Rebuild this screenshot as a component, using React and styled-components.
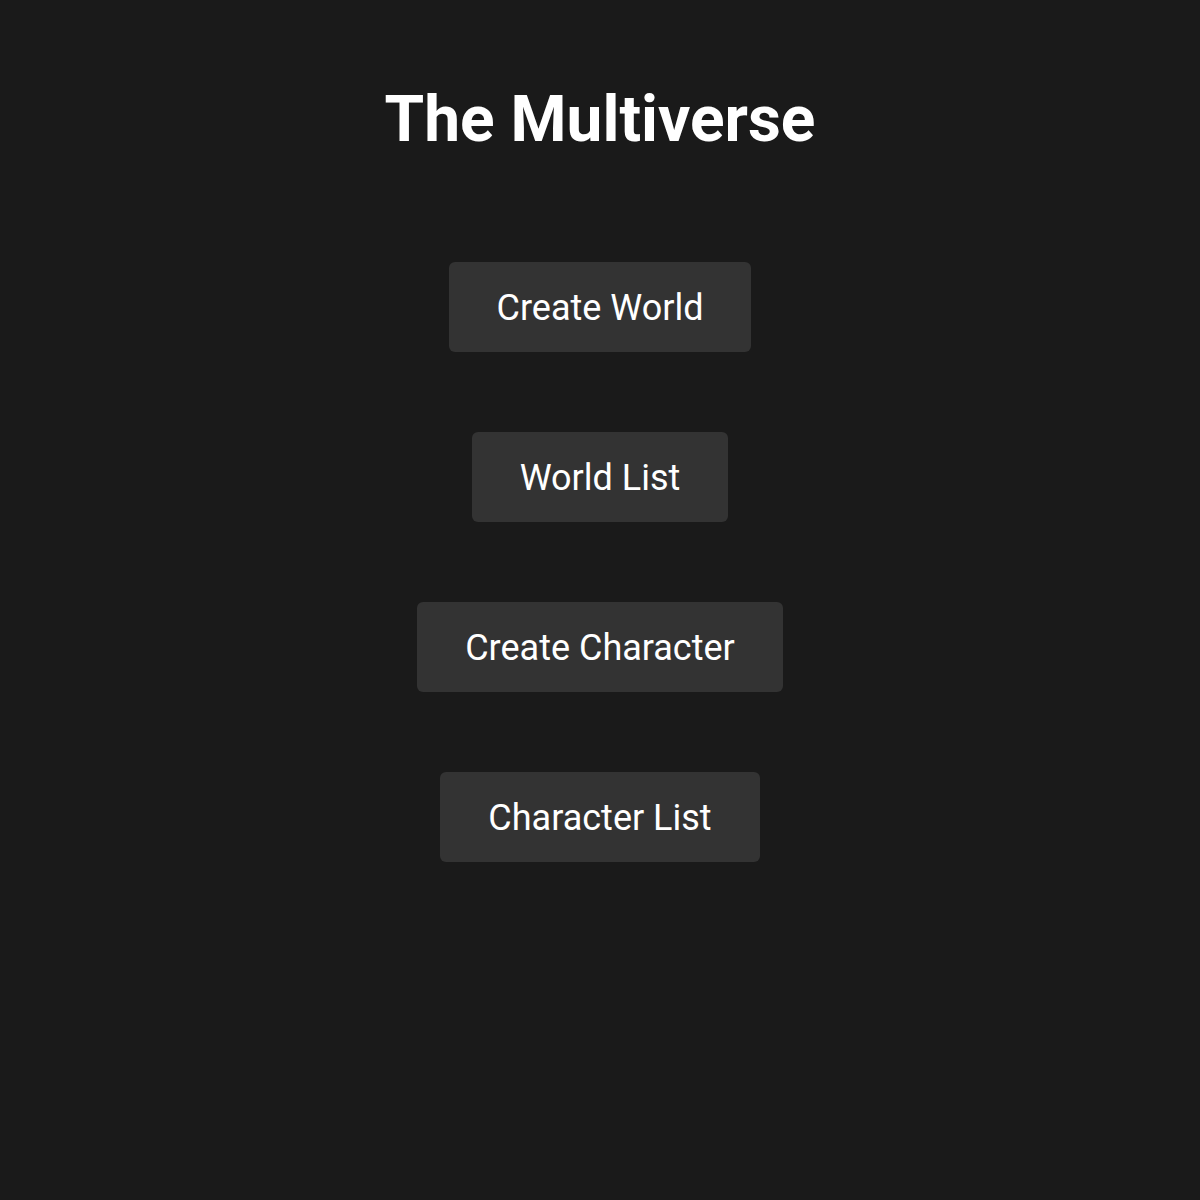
import styled, { createGlobalStyle } from "styled-components";

const GlobalStyle = createGlobalStyle`
  html, body {
    margin: 0;
    padding: 0;
    background: #1a1a1a;
    color: #ffffff;
    font-family: Roboto, "Liberation Sans", sans-serif;
  }
`;

const menuItems = ["Create World", "World List", "Create Character", "Character List"];

function App() {
  return (
    <>
      <GlobalStyle />
      <Page>
        <Title>The Multiverse</Title>
        <Menu>
          {menuItems.map((label) => (
            <MenuButton key={label}>{label}</MenuButton>
          ))}
        </Menu>
      </Page>
    </>
  );
}

export default App;

const Page = styled.div`
  min-height: 1200px;
  display: flex;
  flex-direction: column;
  align-items: center;
  padding-top: 81px;
  box-sizing: border-box;
`;

const Title = styled.h1`
  margin: 0;
  font-size: 64px;
  font-weight: 700;
  line-height: 78px;
`;

const Menu = styled.nav`
  display: flex;
  flex-direction: column;
  align-items: center;
  gap: 80px;
  margin-top: 103px;
`;

const MenuButton = styled.button`
  font-family: Roboto, "Liberation Sans", sans-serif;
  font-size: 36px;
  line-height: 42px;
  color: #ffffff;
  background: #333333;
  border: none;
  border-radius: 6px;
  padding: 25px 48px 23px;
  cursor: pointer;
`;
